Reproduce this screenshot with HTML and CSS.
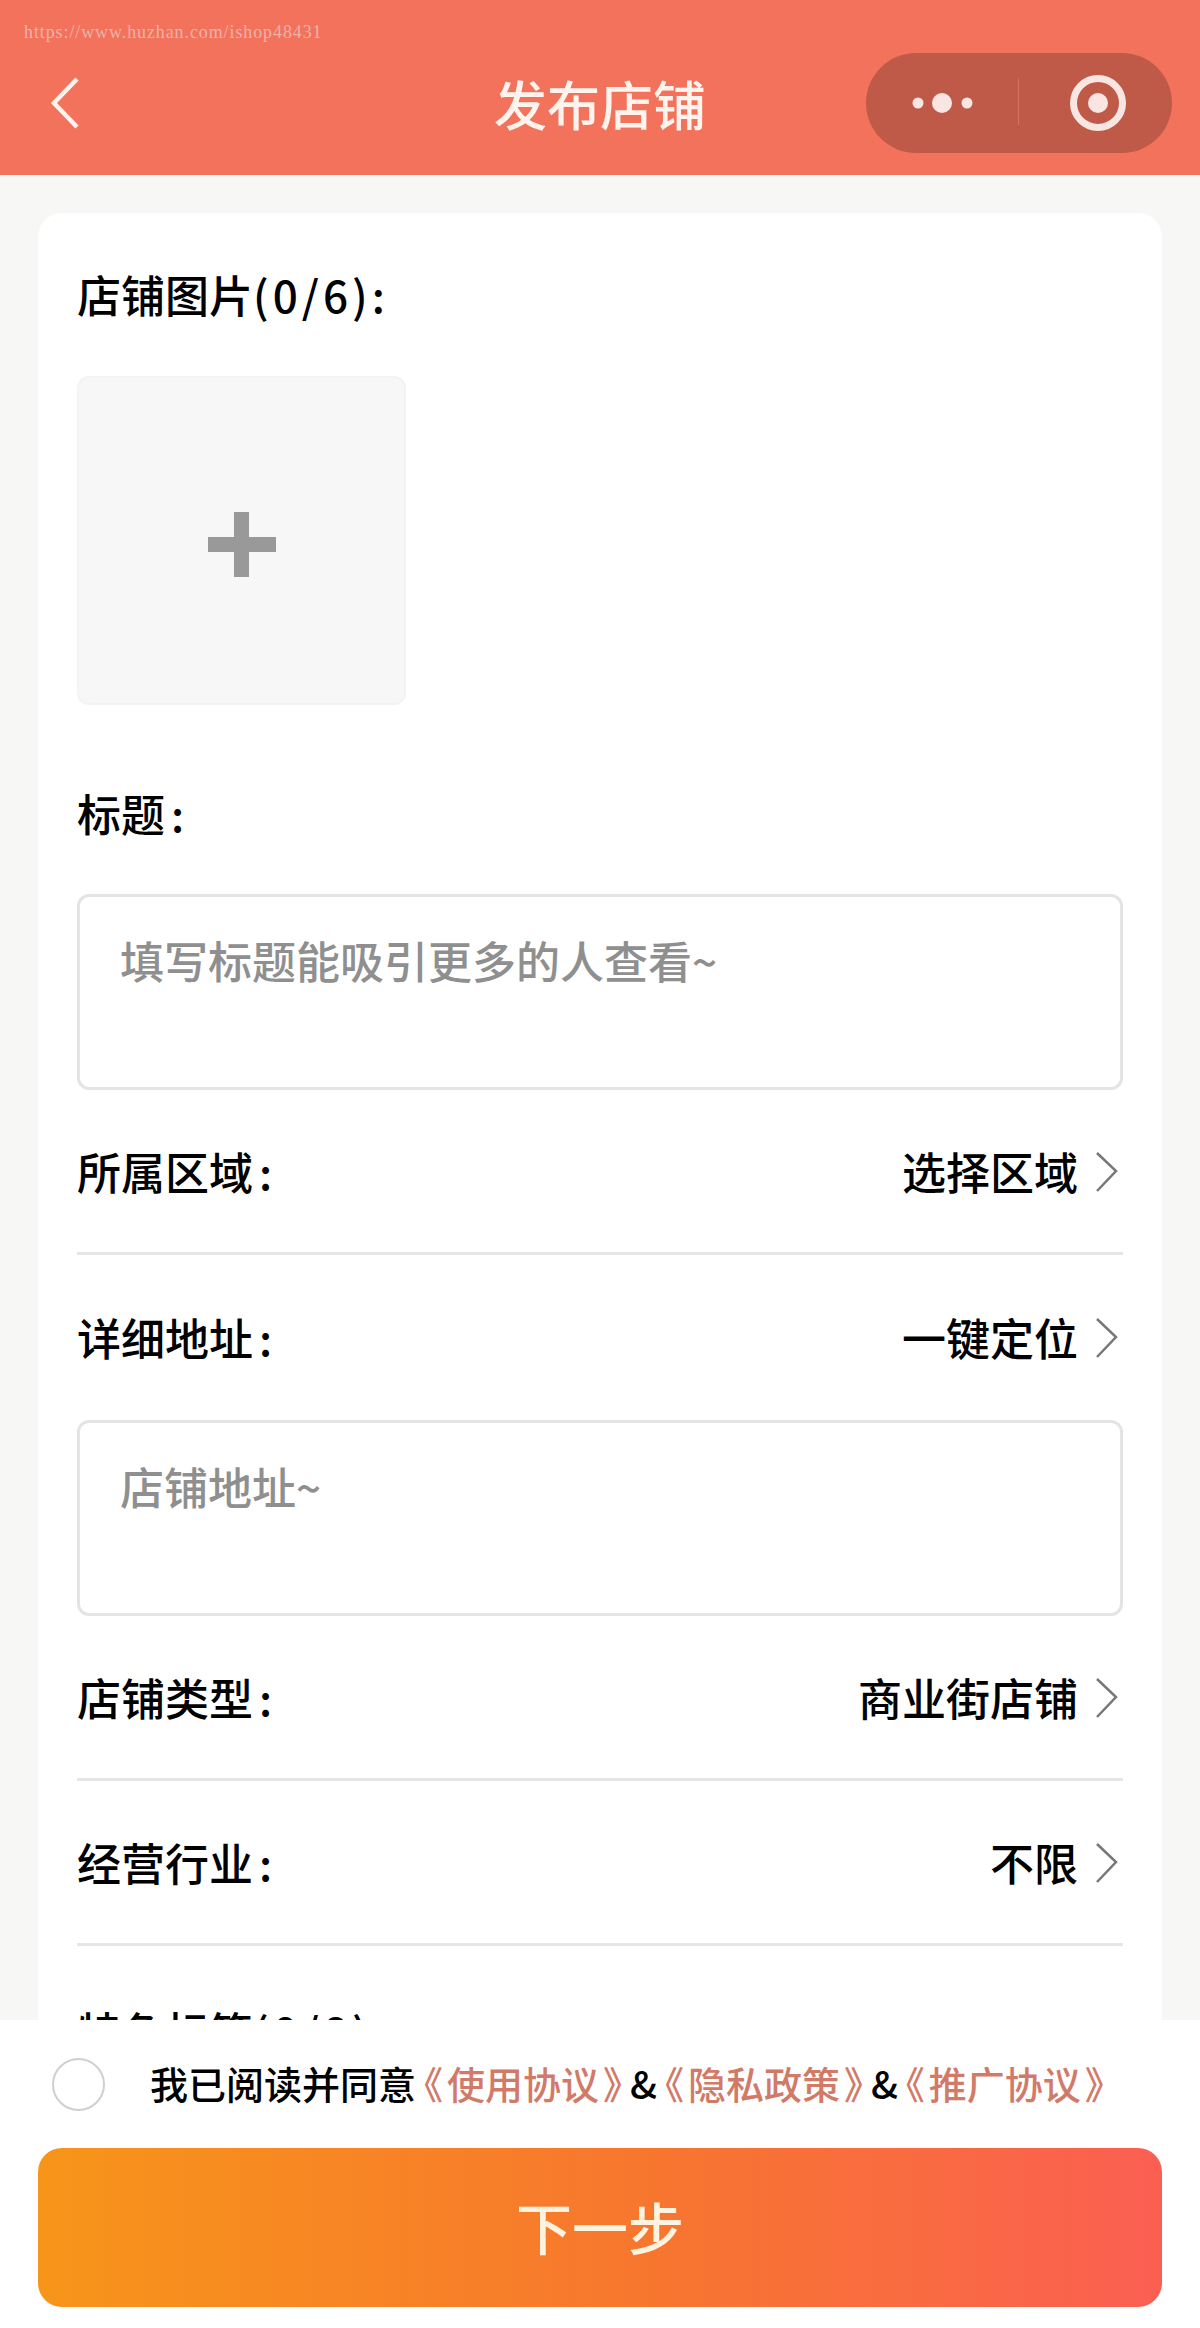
FILE: index.html
```html
<!DOCTYPE html>
<html>
<head>
    <title>发布店铺</title>
    <link rel="stylesheet" href="styles.css">
</head>
<body>
    <div class="page">
        <header class="topbar">
            <span class="watermark">https://www.huzhan.com/ishop48431</span>
            <svg class="back" width="32" height="56" viewBox="0 0 32 56">
                <path d="M27 4 L4 28 L27 52" fill="none" stroke="#fff3ee" stroke-width="4.5"/>
            </svg>
            <h1 class="title">发布店铺</h1>
            <div class="capsule">
                <svg width="306" height="100" viewBox="0 0 306 100">
                    <circle cx="52" cy="50" r="5.5" fill="#f9e6e2"/>
                    <circle cx="76" cy="50" r="10" fill="#f9e6e2"/>
                    <circle cx="101" cy="50" r="5.5" fill="#f9e6e2"/>
                    <rect x="152" y="25" width="1" height="47" fill="#d27362"/>
                    <circle cx="232" cy="50" r="24.5" fill="none" stroke="#f9e6e2" stroke-width="7"/>
                    <circle cx="232" cy="50" r="10" fill="#f9e6e2"/>
                </svg>
            </div>
        </header>

        <main class="content">
            <div class="card">
                <div class="label photo-label">店铺图片<span class="tail">(0/6):</span></div>
                <div class="photo-add">
                    <span class="plus"></span>
                </div>

                <div class="label title-label">标题<span class="colon">:</span></div>
                <div class="input-box">填写标题能吸引更多的人查看~</div>

                <div class="row line">
                    <span class="label">所属区域<span class="colon">:</span></span>
                    <span class="pick">选择区域
                        <svg width="24" height="42" viewBox="0 0 24 42"><path d="M2 2 L21 20 L2 40" fill="none" stroke="#777" stroke-width="2.5"/></svg>
                    </span>
                </div>
                <div class="row">
                    <span class="label">详细地址<span class="colon">:</span></span>
                    <span class="pick">一键定位
                        <svg width="24" height="42" viewBox="0 0 24 42"><path d="M2 2 L21 20 L2 40" fill="none" stroke="#777" stroke-width="2.5"/></svg>
                    </span>
                </div>
                <div class="input-box">店铺地址~</div>

                <div class="row line">
                    <span class="label">店铺类型<span class="colon">:</span></span>
                    <span class="pick">商业街店铺
                        <svg width="24" height="42" viewBox="0 0 24 42"><path d="M2 2 L21 20 L2 40" fill="none" stroke="#777" stroke-width="2.5"/></svg>
                    </span>
                </div>
                <div class="row line">
                    <span class="label">经营行业<span class="colon">:</span></span>
                    <span class="pick">不限
                        <svg width="24" height="42" viewBox="0 0 24 42"><path d="M2 2 L21 20 L2 40" fill="none" stroke="#777" stroke-width="2.5"/></svg>
                    </span>
                </div>
                <div class="label tags-label">特色标签<span class="tail">(0/8)</span></div>
            </div>
        </main>

        <footer class="bottom">
            <div class="agree">
                <span class="radio"></span>
                <p class="agree-text">我已阅读并同意<a><span class="open">《</span>使用协议<span class="close">》</span></a>&amp;<a><span class="open">《</span>隐私政策<span class="close">》</span></a>&amp;<a><span class="open">《</span>推广协议<span class="close">》</span></a></p>
            </div>
            <button class="next">下一步</button>
        </footer>
    </div>
</body>
</html>
```

FILE: styles.css
```css
* {
    box-sizing: border-box;
}
body {
    margin: 0;
    font-family: "Noto Sans CJK SC", "Noto Sans", sans-serif;
    color: #000;
}
.page {
    height: 2328px;
    display: flex;
    flex-direction: column;
    overflow: hidden;
    background-color: #f7f7f6;
}

/* top bar */
.topbar {
    position: relative;
    flex: none;
    height: 175px;
    display: flex;
    align-items: center;
    justify-content: space-between;
    padding: 0 28px 0 50px;
    background-color: #f3725c;
}
.watermark {
    position: absolute;
    left: 24px;
    top: 21px;
    font-family: "Liberation Serif", serif;
    font-size: 18px;
    line-height: 22px;
    letter-spacing: 0.9px;
    color: #e9b3a8;
}
.back {
    margin-top: 30px;
}
.title {
    position: absolute;
    left: 0;
    right: 0;
    top: 70px;
    margin: 0;
    text-align: center;
    font-size: 53px;
    line-height: 66px;
    font-weight: 500;
    color: #fff3ee;
}
.capsule {
    width: 306px;
    height: 100px;
    margin-top: 31px;
    border-radius: 50px;
    background-color: #c05a48;
}
.capsule svg {
    display: block;
}

/* form card */
.content {
    flex: 1;
    overflow: hidden;
    padding: 38px 38px 0;
}
.card {
    padding: 0 39px;
    border-radius: 24px 24px 0 0;
    background-color: #fff;
}
.label {
    font-size: 44px;
    line-height: 46px;
    font-weight: 500;
}
.tail {
    letter-spacing: 4px;
}
.colon {
    padding-left: 6px;
}
.photo-label {
    padding-top: 58px;
    height: 106px;
    margin-bottom: 57px;
}
.photo-add {
    width: 329px;
    height: 329px;
    display: flex;
    align-items: center;
    justify-content: center;
    border: 2px solid #f3f3f3;
    border-radius: 12px;
    background-color: #f7f7f7;
}
.plus {
    position: relative;
    width: 68px;
    height: 15px;
    margin-top: 8px;
    background-color: #999;
}
.plus::after {
    content: "";
    position: absolute;
    left: 26px;
    top: -25px;
    width: 15px;
    height: 65px;
    background-color: #999;
}
.title-label {
    margin-top: 85px;
    margin-bottom: 58px;
}
.input-box {
    height: 196px;
    padding: 40px 40px;
    border: 3px solid #e4e4e4;
    border-radius: 12px;
    font-size: 44px;
    line-height: 46px;
    font-weight: 500;
    color: #8f8f8f;
}
.row {
    height: 165px;
    display: flex;
    align-items: center;
    justify-content: space-between;
    padding-bottom: 1px;
}
.line {
    border-bottom: 3px solid #e6e6e6;
}
.pick {
    display: flex;
    align-items: center;
    gap: 17px;
    padding-right: 4px;
    font-size: 44px;
    line-height: 46px;
    font-weight: 500;
}
.pick svg {
    margin-top: 2px;
}
.tags-label {
    padding-top: 62px;
}

/* bottom bar */
.bottom {
    flex: none;
    height: 308px;
    padding: 0 38px;
    background-color: #fff;
}
.agree {
    height: 128px;
    display: flex;
    align-items: center;
}
.radio {
    flex: none;
    width: 53px;
    height: 53px;
    margin-left: 14px;
    border: 2px solid #cfcfcf;
    border-radius: 50%;
}
.agree-text {
    margin: 0 0 0 45px;
    padding-bottom: 2px;
    font-size: 38px;
    line-height: 40px;
    white-space: nowrap;
    font-weight: 500;
}
.agree-text a {
    color: #d27a68;
}
.open,
.close {
    font-feature-settings: "halt";
}
.open {
    padding-left: 8px;
    padding-right: 4px;
}
.close {
    padding-left: 4px;
    padding-right: 8px;
}
.next {
    display: block;
    width: 100%;
    height: 159px;
    padding-bottom: 6px;
    border: none;
    border-radius: 24px;
    font-family: inherit;
    font-size: 56px;
    font-weight: 500;
    color: #fff3e0;
    background: linear-gradient(90deg, #f7951a, #f7762f 55%, #fb5f52);
}
```
